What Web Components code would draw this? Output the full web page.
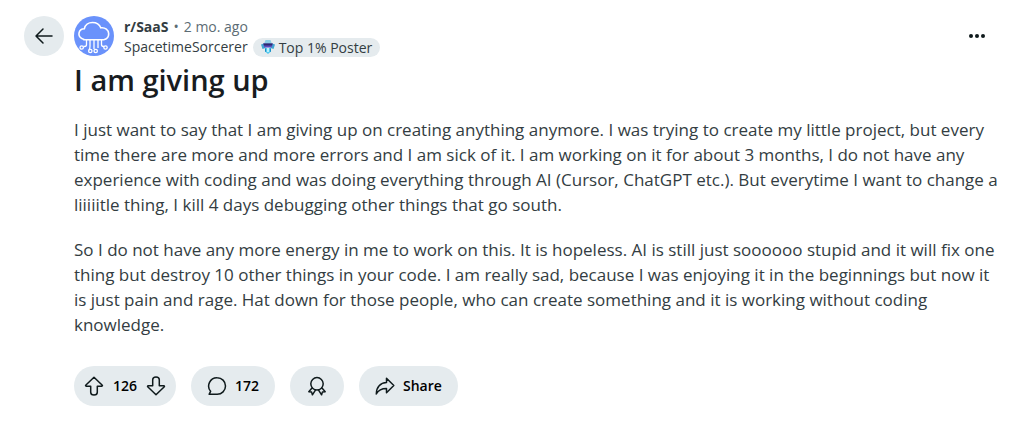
<!DOCTYPE html>
<html lang="en">
<head>
<meta charset="utf-8">
<meta name="viewport" content="width=device-width, initial-scale=1">
<title>I am giving up : r/SaaS</title>
<style>
body {
  margin: 0;
  background: #fff;
  color: #333d42;
  font-family: "Segoe UI", "Open Sans", "Noto Sans", sans-serif;
  --pill: #e5ebee;
  --ink: #0f1a1c;
  --strong: #181c1f;
  --muted: #5c6c74;
}
</style>
</head>
<body>
<post-page>
  <post-header slot="header" community="r/SaaS" age="2 mo. ago" author="SpacetimeSorcerer">
    <flair-badge>Top 1% Poster</flair-badge>
  </post-header>
  <post-body heading="I am giving up">
    <p>I just want to say that I am giving up on creating anything anymore. I was trying to create my little project, but every<br>
    time there are more and more errors and I am sick of it. I am working on it for about 3 months, I do not have any<br>
    experience with coding and was doing everything through AI (Cursor, ChatGPT etc.). But everytime I want to change a<br>
    liiiiitle thing, I kill 4 days debugging other things that go south.</p>
    <p>So I do not have any more energy in me to work on this. It is hopeless. AI is still just soooooo stupid and it will fix one<br>
    thing but destroy 10 other things in your code. I am really sad, because I was enjoying it in the beginnings but now it<br>
    is just pain and rage. Hat down for those people, who can create something and it is working without coding<br>
    knowledge.</p>
  </post-body>
  <post-actions slot="actions" votes="126" comments="172"></post-actions>
</post-page>

<script>
class BaseElement extends HTMLElement {
  connectedCallback() {
    if (this.shadowRoot) return;
    this.attachShadow({ mode: "open" }).innerHTML = this.view();
  }
  attr(name) { return this.getAttribute(name) || ""; }
}

class PostPage extends BaseElement {
  view() {
    return `
      <style>
        :host { display: block; padding: 16px 8px 18px 24px; }
        .content { padding-left: 50px; }
      </style>
      <main>
        <slot name="header"></slot>
        <div class="content">
          <slot></slot>
          <slot name="actions"></slot>
        </div>
      </main>`;
  }
}

class PostHeader extends BaseElement {
  view() {
    return `
      <style>
        :host { display: block; padding-right: 14px; }
        header { display: flex; align-items: center; gap: 10px; height: 40px; }
        button { border: 0; padding: 0; border-radius: 50%; display: grid; place-items: center; cursor: pointer; color: var(--ink); flex: none; }
        .back { width: 40px; height: 40px; background: var(--pill); }
        .more { width: 32px; height: 32px; background: none; margin-left: auto; }
        .avatar { display: block; width: 40px; height: 40px; flex: none; }
        svg { display: block; }
        .meta { font-size: 14px; line-height: 20px; padding-top: 2px; }
        .row { display: flex; align-items: center; height: 20px; white-space: nowrap; }
        .first { gap: 5px; color: var(--muted); }
        .second { gap: 5px; }
        a { color: #333d42; text-decoration: none; }
        .community { font-weight: 700; }
      </style>
      <header>
        <button class="back" type="button" aria-label="Back">
          <svg width="20" height="20" viewBox="0 0 20 20" fill="none" stroke="currentColor" stroke-width="1.5" stroke-linecap="round" stroke-linejoin="round"><path d="M18 10H2.500M9 3L2 10l7 7"/></svg>
        </button>
        <svg class="avatar" viewBox="0 0 40 40" fill="none" stroke="#fff" stroke-width="1.300" aria-hidden="true">
          <circle cx="20" cy="20" r="20" fill="#6a92fb" stroke="none"/>
          <path stroke-width="1.600" d="M10 23.500C6.500 22.500 4.500 20 5 17.200c.5-2.700 2.700-4.400 5.300-4.400C11 9 14.500 6.500 18.500 6.500c3.800 0 7 2 8.300 5.300 4.300-.6 7.900 2 7.900 6 0 3-1.900 5.500-5 5.900H10z"/>
          <path d="M12.500 24v4.500q0 2-2 2H9.500M16 24v6q0 3-1 4M20 24v9M24 24v8M27.500 24v4.500q0 2 2 2h.5"/>
          <circle cx="7.700" cy="31.500" r="1.700"/><circle cx="16.300" cy="35" r="1.700"/><circle cx="21.700" cy="35" r="1.700"/><circle cx="31.500" cy="31.500" r="1.700"/>
        </svg>
        <div class="meta">
          <div class="row first"><a class="community" href="#community">${this.attr("community")}</a><span>•</span><time>${this.attr("age")}</time></div>
          <div class="row second"><a href="#author">${this.attr("author")}</a><slot></slot></div>
        </div>
        <button class="more" type="button" aria-label="More options">
          <svg width="16" height="16" viewBox="0 0 16 16" fill="currentColor"><circle cx="2" cy="8" r="2"/><circle cx="8" cy="8" r="2"/><circle cx="14" cy="8" r="2"/></svg>
        </button>
      </header>`;
  }
}

class FlairBadge extends BaseElement {
  view() {
    return `
      <style>
        :host { display: flex; align-items: center; gap: 4px; height: 19px; padding: 0 8px; border-radius: 10px; background: var(--pill); color: #333d42; font-size: 14px; line-height: 19px; }
        svg { display: block; flex: none; }
      </style>
      <svg width="14" height="14" viewBox="0 0 14 14" aria-hidden="true">
        <path fill="#8fd0e6" d="M4.500 0h5L11 4H3z"/>
        <path fill="#3fa5d0" d="M0 4.500l3-1L4.500 8 1.500 9zM14 4.500l-3-1L9.500 8l3 1z"/>
        <path fill="#55c8ee" d="M4 8h6v3.500L7 14l-3-2.500z"/>
        <path fill="#5a4bc0" d="M2 3.500h10L10.500 7.500h-7z"/>
        <path fill="#2d2a6d" d="M2.500 3.500h9l-.5 2H3z"/>
        <path fill="#1a8fc4" d="M4 8l1 1v3l-1-.5zM10 8L9 9v3l1-.5z"/>
        <path fill="#d5fbff" d="M6.200 8h1.600v4H6.200z"/>
      </svg>
      <span><slot></slot></span>`;
  }
}

class PostBody extends BaseElement {
  view() {
    return `
      <style>
        :host { display: block; }
        h1 { margin: 8px 0 21px; font-size: 29px; line-height: 32px; font-weight: 600; color: var(--strong); }
        .text { font-size: 17px; line-height: 25px; }
        ::slotted(p) { margin: 0 0 20px; }
      </style>
      <article>
        <h1>${this.attr("heading")}</h1>
        <div class="text"><slot></slot></div>
      </article>`;
  }
}

class PostActions extends BaseElement {
  view() {
    return `
      <style>
        :host { display: flex; flex-wrap: wrap; gap: 15px; margin-top: 29px; font-size: 14px; line-height: 20px; font-weight: 600; color: #000; }
        .votes, .pill { display: flex; align-items: center; height: 40px; border-radius: 20px; background: var(--pill); }
        .votes { gap: 9px; padding: 0 10px; }
        button { font: inherit; color: inherit; border: 0; cursor: pointer; }
        .pill { gap: 8px; padding: 0 16px; }
        .award { padding: 0 17px; }
        .votes button { padding: 0; background: none; display: block; }
        svg { display: block; fill: none; stroke: #0f1a1c; stroke-width: 1.500; stroke-linejoin: round; stroke-linecap: round; }
      </style>
      <div class="votes">
        <button type="button" aria-label="Upvote"><svg width="20" height="20" viewBox="0 0 20 20"><path d="M10 1.200L1.700 9.200a.6.6 0 0 0 .4 1h4.600v6a3.300 2.800 0 0 0 6.600 0v-6h4.600a.6.6 0 0 0 .4-1z"/></svg></button>
        <span>${this.attr("votes")}</span>
        <button type="button" aria-label="Downvote"><svg width="20" height="20" viewBox="0 0 20 20"><path d="M10 18.800l8.300-8a.6.6 0 0 0-.4-1h-4.600v-6a3.300 2.800 0 0 0-6.600 0v6H2.100a.6.6 0 0 0-.4 1z"/></svg></button>
      </div>
      <button class="pill" type="button"><svg width="20" height="20" viewBox="0 0 20 20"><path d="M10.200 1.700a8.300 8.300 0 1 1 0 16.600H2.100l1.500-3A8.300 8.300 0 0 1 10.200 1.700z"/></svg><span>${this.attr("comments")}</span></button>
      <button class="pill award" type="button" aria-label="Award"><svg width="20" height="20" viewBox="0 0 20 20"><circle cx="10" cy="7.800" r="6.200"/><path d="M5 12l-3.200 3.800 2.800.3.800 2.700 3.200-5M15 12l3.200 3.800-2.800.3-.8 2.700-3.200-5"/></svg></button>
      <button class="pill" type="button"><svg width="20" height="20" viewBox="0 0 20 20"><path d="M11.500 2.300L18.800 9.500l-7.300 7.200v-4.200C6.500 12.500 3.500 14 1.300 18c0-7 4.200-11.200 10.200-11.500z"/></svg><span>Share</span></button>`;
  }
}

customElements.define("post-page", PostPage);
customElements.define("post-header", PostHeader);
customElements.define("flair-badge", FlairBadge);
customElements.define("post-body", PostBody);
customElements.define("post-actions", PostActions);
</script>
</body>
</html>
